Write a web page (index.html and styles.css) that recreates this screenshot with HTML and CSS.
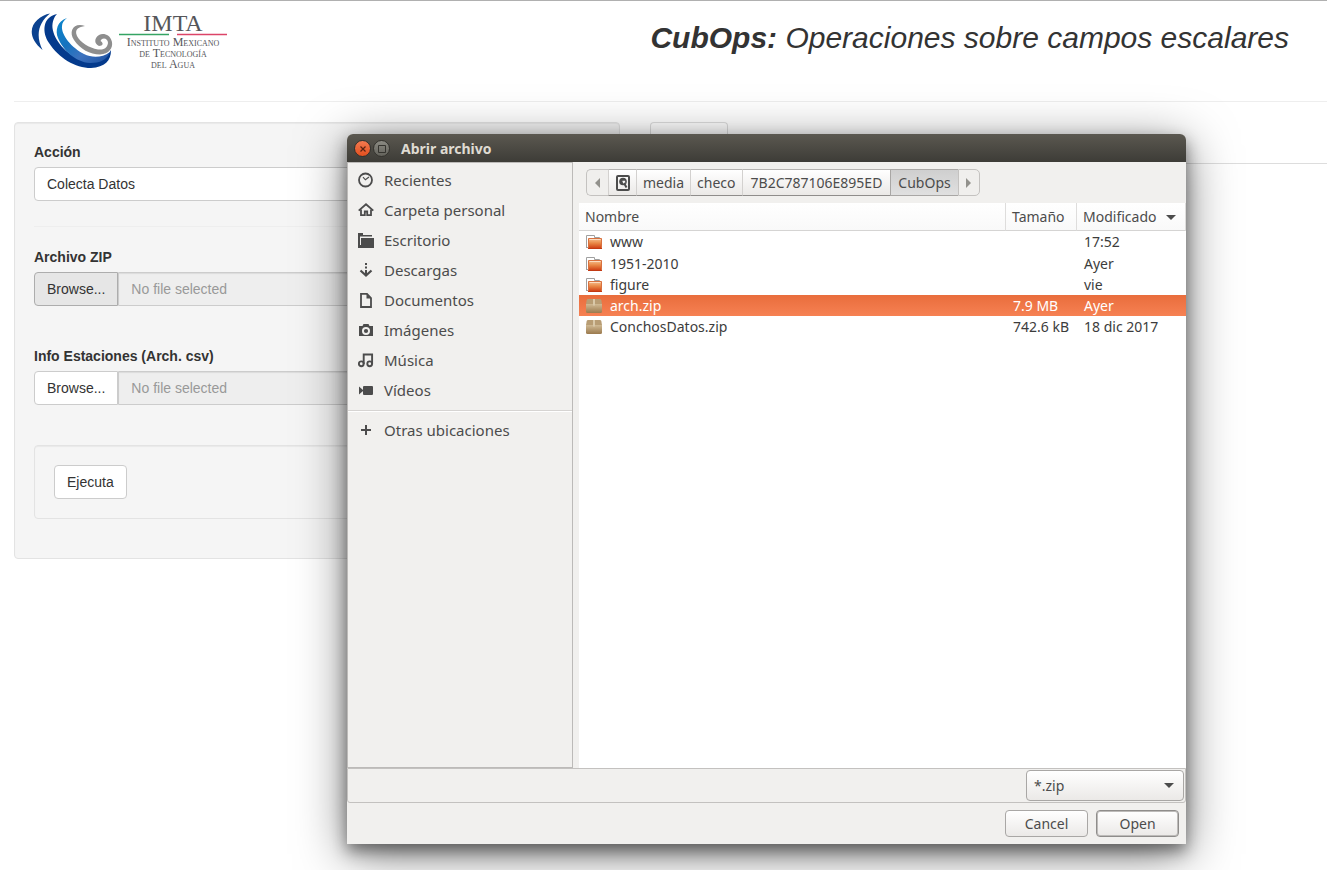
FILE: index.html
```html
<!DOCTYPE html>
<html lang="es">
<head>
<meta charset="utf-8">
<title>CubOps</title>
<link rel="stylesheet" href="styles.css">
</head>
<body>
<div class="page">
  <header class="header">
    <svg class="logo" width="200" height="60" viewBox="0 0 200 60" role="img" aria-label="IMTA">
      <defs>
        <linearGradient id="sky" x1="0" y1="0" x2="1" y2="1"><stop offset="0" stop-color="#0a86cc"/><stop offset=".4" stop-color="#1672be"/><stop offset=".65" stop-color="#3d73bf"/><stop offset="1" stop-color="#1c4f9f"/></linearGradient>
      </defs>
      <path fill="#0b4290" d="M20 2.500C6 5-9 21 12.500 39C5 24 9 11 20 2.500Z"/>
      <path fill="#043a8c" d="M27 3C12 6 12 22 19 32C29 47 45 57 61 57C75 56 81 50 81 39C75 50 62 52 50 48C36 43 24 29 22.500 17C22 11 24 6 27 3Z"/>
      <path fill="url(#sky)" d="M37 7C27 10 25 20 28 27C33 39 45 51 60 52C70 52 77 49 80 41C72 47 62 47 54 43C42 37 31 24 32 15C32 12 34 9 37 7Z"/>
      <path fill="#8e8e8e" d="M55 15C44 11 38 20 44 29C50 38 60 43.500 70 43.500C79 43 83 37 82 31C80 23 73 22 69 24C64 27 64 33 69 35C73 35 74 32 70.500 30C72 26 78 27 78 32C77 38 73 39 68 38.500C59 37 50 31 47 25C44 18 49 16 55 15Z"/>
      <text class="logo-name" x="143" y="20">IMTA</text>
      <path stroke="#35a463" stroke-width="1.3" d="M89 23.500H139"/>
      <path stroke="#dc4468" stroke-width="1.3" d="M147 23.500H197"/>
      <text class="logo-sub" x="143" y="35">Instituto Mexicano</text>
      <text class="logo-sub" x="143" y="46">de Tecnología</text>
      <text class="logo-sub" x="143" y="57">del Agua</text>
    </svg>
    <h1 class="title"><strong>CubOps:</strong> Operaciones sobre campos escalares</h1>
  </header>
  <main class="columns">
    <form class="well">
      <label class="label" for="accion">Acción</label>
      <select class="control" id="accion"><option>Colecta Datos</option></select>
      <hr class="rule">
      <label class="label" for="zip">Archivo ZIP</label>
      <div class="file-group">
        <button class="btn btn-joined btn-pressed" type="button">Browse...</button>
        <input class="file-name" id="zip" type="text" placeholder="No file selected" readonly>
      </div>
      <label class="label" for="csv">Info Estaciones (Arch. csv)</label>
      <div class="file-group">
        <button class="btn btn-joined" type="button">Browse...</button>
        <input class="file-name" id="csv" type="text" placeholder="No file selected" readonly>
      </div>
      <div class="well well-inner">
        <button class="btn" type="button">Ejecuta</button>
      </div>
    </form>
    <div class="tabs"><span class="tab"></span></div>
  </main>

  <section class="dialog" role="dialog" aria-labelledby="dialog-title">
    <header class="titlebar">
      <button class="orb orb-close" type="button" aria-label="Cerrar"><svg width="6" height="6" viewBox="0 0 6 6"><path d="M.5.5L5.500 5.500M5.500.5L.5 5.500" stroke="#5a2312" stroke-width="1.2"/></svg></button>
      <button class="orb" type="button" aria-label="Maximizar"><svg width="8" height="8" viewBox="0 0 8 8"><path d="M.5.5H7.500V7.500H.5Z" fill="none" stroke="#35342f"/></svg></button>
      <h2 class="dialog-title" id="dialog-title">Abrir archivo</h2>
    </header>
    <div class="dialog-body">
      <nav class="places">
        <a class="place" href="#"><svg class="icon" viewBox="0 0 16 16"><circle cx="7.500" cy="8" r="6.500" fill="none" stroke="currentColor" stroke-width="1.8"/><path d="M5 5.200L7.400 7.800L11 5" fill="none" stroke="currentColor" stroke-width="1.2"/></svg>Recientes</a>
        <a class="place" href="#"><svg class="icon" viewBox="0 0 16 16"><path d="M.7 8.600L8 2.200L15.300 8.600" fill="none" stroke="currentColor" stroke-width="1.8"/><path d="M3 7.500V13.200H6.800V9.500H9.200V13.200H13V7.500" fill="none" stroke="currentColor" stroke-width="1.8"/></svg>Carpeta personal</a>
        <a class="place" href="#"><svg class="icon" viewBox="0 0 16 16"><path fill="currentColor" d="M0 1H5V3H14V4.500H2V14H0ZM3 6H16V16H3Z"/><path fill="currentColor" d="M0 13H3V16H0Z"/></svg>Escritorio</a>
        <a class="place" href="#"><svg class="icon" viewBox="0 0 16 16"><path d="M8 1V3M8 4.500V6.500M8 8V12" stroke="currentColor" stroke-width="2"/><path d="M2.500 8.500L8 13.500L13.500 8.500" fill="none" stroke="currentColor" stroke-width="2.2"/></svg>Descargas</a>
        <a class="place" href="#"><svg class="icon" viewBox="0 0 16 16"><path d="M3 1.900H9L13 6V15H3Z" fill="none" stroke="currentColor" stroke-width="1.8"/><path d="M8.500 2V6.500H13Z" fill="currentColor"/></svg>Documentos</a>
        <a class="place" href="#"><svg class="icon" viewBox="0 0 16 16"><path fill="currentColor" fill-rule="evenodd" d="M1 4H4.500L5.500 2H10.500L11.500 4H15V14H1ZM8 5A4 4 0 1 0 8 13A4 4 0 1 0 8 5Z"/><circle cx="8" cy="9" r="2.1" fill="currentColor"/></svg>Imágenes</a>
        <a class="place" href="#"><svg class="icon" viewBox="0 0 16 16"><g fill="none" stroke="currentColor" stroke-width="1.9"><circle cx="3.300" cy="11.800" r="2.400"/><circle cx="11.700" cy="11.800" r="2.400"/><path d="M5.700 12V2.500H14.100V12"/></g></svg>Música</a>
        <a class="place" href="#"><svg class="icon" viewBox="0 0 16 16"><path fill="currentColor" d="M1 4.500L5 8V9L1 12.500ZM6 4H14A1 1 0 0 1 15 5V12A1 1 0 0 1 14 13H6A1 1 0 0 1 5 12V5A1 1 0 0 1 6 4Z"/></svg>Vídeos</a>
        <hr class="places-rule">
        <a class="place" href="#"><svg class="icon" viewBox="0 0 16 16"><path d="M8 3V13M3 8H13" stroke="currentColor" stroke-width="2"/></svg>Otras ubicaciones</a>
      </nav>
      <div class="browser">
        <div class="pathbar">
          <button class="crumb crumb-arrow" type="button" aria-label="Anterior"><svg width="5" height="10" viewBox="0 0 5 10"><path d="M5 0V10L0 5Z" fill="#92918c"/></svg></button>
          <button class="crumb crumb-disk" type="button" aria-label="Disco"><svg width="14" height="16" viewBox="0 0 14 16"><rect x="1" y="1" width="12" height="14" rx="1" fill="none" stroke="currentColor" stroke-width="2"/><circle cx="7" cy="6.500" r="3.800" fill="currentColor"/><path d="M6.500 6.500H8.500V8H7" fill="none" stroke="#f7f7f7" stroke-width="1.300"/><path d="M8 8L10.500 12.500" stroke="currentColor" stroke-width="2"/></svg></button>
          <button class="crumb" type="button">media</button>
          <button class="crumb" type="button">checo</button>
          <button class="crumb crumb-long" type="button">7B2C787106E895ED</button>
          <button class="crumb crumb-current" type="button">CubOps</button>
          <button class="crumb crumb-arrow" type="button" aria-label="Siguiente"><svg width="5" height="10" viewBox="0 0 5 10"><path d="M0 0V10L5 5Z" fill="#92918c"/></svg></button>
        </div>
        <div class="listing">
          <svg class="defs" width="0" height="0" aria-hidden="true">
            <defs>
              <linearGradient id="orange" x1="0" y1="0" x2="0" y2="1"><stop offset="0" stop-color="#f6bf90"/><stop offset=".45" stop-color="#ea8a48"/><stop offset="1" stop-color="#cf3c12"/></linearGradient>
              <linearGradient id="box" x1="0" y1="0" x2="0" y2="1"><stop offset="0" stop-color="#d0ba94"/><stop offset="1" stop-color="#9b7a4e"/></linearGradient>
              <symbol id="folder" viewBox="0 1 16 16"><path d="M.5 13.500V1.500H8.500V3.500H13.500V6" fill="#fff" stroke="#a0a0a0"/><path d="M0 13.500H3" stroke="#a0a0a0"/><path d="M2.500 4.500H15.500V14.500H2.500Z" fill="url(#orange)" stroke="#d9713f"/><path d="M3.500 5.500H14.500" stroke="#fbdcc0"/><path d="M2 14.500H16" stroke="#c23a14"/></symbol>
              <symbol id="package" viewBox="0 1 16 16"><path d="M0 6H16V13.500Q16 15 14.500 15H1.500Q0 15 0 13.500Z" fill="url(#box)"/><path d="M2 1H14Q15 1 15.300 2L16 6H0L.7 2Q1 1 2 1Z" fill="#b89d74"/><path d="M7 1H9V7.500H7Z" fill="#d9c8a8"/></symbol>
            </defs>
          </svg>
          <table class="files">
            <colgroup><col><col class="col-size"><col class="col-date"></colgroup>
            <thead><tr><th>Nombre</th><th>Tamaño</th><th>Modificado<span class="sort sort-column"></span></th></tr></thead>
            <tbody>
              <tr><td><svg class="file-icon"><use href="#folder"/></svg>www</td><td></td><td>17:52</td></tr>
              <tr><td><svg class="file-icon"><use href="#folder"/></svg>1951-2010</td><td></td><td>Ayer</td></tr>
              <tr><td><svg class="file-icon"><use href="#folder"/></svg>figure</td><td></td><td>vie</td></tr>
              <tr class="selected"><td><svg class="file-icon"><use href="#package"/></svg>arch.zip</td><td>7.9 MB</td><td>Ayer</td></tr>
              <tr><td><svg class="file-icon"><use href="#package"/></svg>ConchosDatos.zip</td><td>742.6 kB</td><td>18 dic 2017</td></tr>
            </tbody>
          </table>
        </div>
      </div>
    </div>
    <div class="filter-bar">
      <div class="combo"><select class="combo-select" aria-label="Filtro"><option>*.zip</option></select><span class="sort"></span></div>
    </div>
    <footer class="actions">
      <button class="action" type="button">Cancel</button>
      <button class="action action-default" type="button">Open</button>
    </footer>
  </section>
</div>
</body>
</html>
```
FILE: styles.css
```css
* { box-sizing: border-box; }

body {
  margin: 0;
  background: #fff;
  color: #333;
  font: 14px/20px "Liberation Sans", Arial, sans-serif;
}

button, input, select { font: inherit; color: inherit; }

.page {
  position: relative;
  min-height: 100vh;
  overflow: hidden;
  border-top: 1px solid #b0b0b0;
  padding-left: 14px;
}

.header {
  display: flex;
  justify-content: space-between;
  align-items: flex-start;
  height: 101px;
  border-bottom: 1px solid #eee;
  padding: 10px 38px 0 16px;
}

.logo { flex: none; }
.logo-name, .logo-sub { font-family: "Liberation Serif", serif; text-anchor: middle; fill: #55565a; }
.logo-name { font-size: 24px; }
.logo-sub { font-size: 12px; font-variant: small-caps; }

.title {
  margin: 10px 0 0;
  font-size: 30px;
  line-height: 33px;
  font-weight: 400;
  font-style: italic;
  white-space: nowrap;
}

.columns {
  display: grid;
  grid-template-columns: 606fr 677fr;
  gap: 30px;
  align-items: start;
  padding-top: 20px;
}

.well {
  border: 1px solid #e3e3e3;
  border-radius: 4px;
  background: #f5f5f5;
  box-shadow: inset 0 1px 1px rgba(0, 0, 0, .05);
  padding: 19px;
}
.well-inner { margin: 40px 0 20px; }

.label { display: block; margin-bottom: 5px; font-weight: 700; }

.control {
  display: block;
  appearance: none;
  width: 100%;
  height: 34px;
  border: 1px solid #ccc;
  border-radius: 4px;
  background: #fff;
  padding: 0 12px;
}

.rule { margin: 25px 0 20px; border: 0; border-top: 1px solid #eee; }

.file-group { display: flex; margin-bottom: 40px; }

.btn {
  height: 34px;
  border: 1px solid #ccc;
  border-radius: 4px;
  background: #fff;
  padding: 0 12px;
}
.btn-joined { border-radius: 4px 0 0 4px; }
.btn-pressed { border-color: #adadad; background: #e6e6e6; }

.file-name {
  flex: 1;
  min-width: 0;
  height: 34px;
  border: 1px solid #ccc;
  border-radius: 0 4px 4px 0;
  background: #eee;
  box-shadow: inset 0 1px 1px rgba(0, 0, 0, .08);
  padding: 0 12px;
}
.file-name::placeholder { color: #999; opacity: 1; }

.tabs { height: 42px; border-bottom: 1px solid #ddd; }
.tab {
  display: block;
  width: 78px;
  height: 42px;
  border: 1px solid #ddd;
  border-bottom-color: #fff;
  border-radius: 4px 4px 0 0;
  background: #fff;
}

.dialog {
  position: absolute;
  inset: 133px 141px 26px 347px;
  display: flex;
  flex-direction: column;
  border-radius: 6px 6px 0 0;
  background: #f1f0ee;
  box-shadow: 0 7px 16px rgba(0, 0, 0, .45), 0 10px 50px rgba(0, 0, 0, .5);
  color: #4c4c4c;
  font-family: "Noto Sans", "Open Sans", sans-serif;
  font-size: 14px;
}

.titlebar {
  display: flex;
  align-items: center;
  gap: 2px;
  height: 28px;
  border-radius: 6px 6px 0 0;
  background: linear-gradient(#5b5850, #3d3c37);
  padding: 1px 0 0 7px;
}
.orb {
  display: grid;
  place-items: center;
  width: 17px;
  height: 17px;
  border: 1px solid #33322d;
  border-radius: 50%;
  background: linear-gradient(#8b8a82, #63625b);
  padding: 0;
}
.orb-close { background: linear-gradient(#f47a50, #e2501f); }
.dialog-title {
  margin: 0 0 0 9px;
  color: #dfdbd2;
  font-size: 14px;
  line-height: 20px;
}

.dialog-body { flex: 1; display: flex; min-height: 0; }

.places {
  width: 226px;
  flex: none;
  border: 1px solid #bcbab8;
  padding-top: 2px;
}
.place {
  display: flex;
  align-items: center;
  gap: 10px;
  height: 30px;
  padding-left: 10px;
  color: inherit;
  text-decoration: none;
  font-size: 15px;
}
.icon { width: 16px; height: 16px; }
.places-rule {
  margin: 5px 0 3px;
  border: 0;
  border-top: 1px solid #d6d4d2;
  border-bottom: 1px solid #fff;
}

.browser { flex: 1; display: flex; flex-direction: column; min-width: 0; padding-left: 6px; }

.pathbar { display: flex; margin: 7px; height: 27px; }
.crumb {
  border: 1px solid #b5b3b1;
  border-left-color: #d3d1cf;
  border-right-width: 0;
  border-bottom-color: #8f8d8b;
  background: linear-gradient(#fff, #ebe9e7);
  padding: 0 6px;
}
.crumb-arrow {
  display: grid;
  place-items: center;
  width: 22px;
  border-color: #c4c2c0;
  background: #f0efed;
}
.crumb-arrow:first-child { border-radius: 5px 0 0 5px; }
.crumb-arrow:last-child { border-right-width: 1px; border-radius: 0 5px 5px 0; }
.crumb-disk { display: grid; place-items: center; width: 28px; }
.crumb-long { padding: 0 8px; }
.crumb-current { border-color: #a9a7a5; background: linear-gradient(#cfcfcf, #e0e0e0); padding: 0 7px; }

.listing { flex: 1; background: #fff; }
.defs { display: block; }
.files { width: 100%; border-collapse: separate; border-spacing: 0; table-layout: fixed; }
.col-size { width: 71px; }
.col-date { width: 109px; }
.files th {
  height: 28px;
  border-right: 1px solid #dedddc;
  border-bottom: 1px solid #d5d4d3;
  background: linear-gradient(#fff, #f9f9f9);
  padding: 0 0 0 6px;
  font-weight: 400;
  text-align: left;
  white-space: nowrap;
}
.files td { height: 21px; padding: 0 0 0 7px; color: #3c3c3c; line-height: 20px; white-space: nowrap; }
.files tr:first-child td { height: 22px; }
.files .selected td { background: linear-gradient(#e96d3c, #f68153); color: #fff; }
.file-icon { width: 16px; height: 16px; margin-right: 8px; vertical-align: middle; }

.sort {
  display: inline-block;
  border: 5px solid transparent;
  border-top-color: #4c4c4c;
  border-bottom-width: 0;
  vertical-align: middle;
}
.sort-column { margin-left: 10px; }

.filter-bar {
  display: flex;
  justify-content: flex-end;
  height: 35px;
  border: 1px solid #c3c1bf;
  border-radius: 0 0 3px 3px;
  padding: 1px;
}
.combo {
  display: flex;
  align-items: center;
  width: 158px;
  height: 31px;
  border: 1px solid #a9a7a5;
  border-radius: 4px;
  background: linear-gradient(#fff, #ebe9e7);
  padding-right: 9px;
}
.combo-select {
  flex: 1;
  appearance: none;
  min-width: 0;
  border: 0;
  background: none;
  padding: 0 7px;
}

.actions { display: flex; justify-content: flex-end; gap: 8px; height: 41px; padding: 7px 7px 0; }
.action {
  width: 83px;
  height: 27px;
  border: 1px solid #a9a7a5;
  border-radius: 4px;
  background: linear-gradient(#fff, #ebe9e7);
  padding: 0;
}
.action-default { border-color: #8f8d8b; box-shadow: inset 0 0 0 1px #bdbbb9; }
```
